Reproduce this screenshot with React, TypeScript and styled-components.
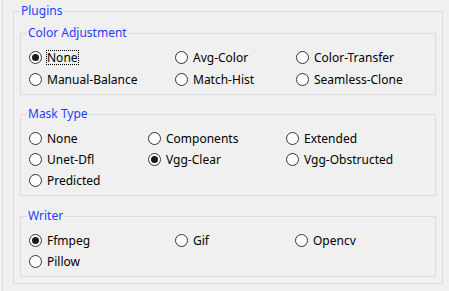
import React from 'react';
import styled, { createGlobalStyle } from 'styled-components';

const Global = createGlobalStyle`
  html, body { margin: 0; padding: 0; background: #f0f0f0; }
  body {
    font-family: "Segoe UI", "Noto Sans", sans-serif;
    font-size: 12px;
    color: #000;
  }
`;

const Window = styled.div`
  width: 447px;
  height: 291px;
  box-sizing: border-box;
  margin-left: 2px;
  border-left: 1px solid #dcdcdc;
  padding: 3px 0 0 10px;
`;

const Group = styled.fieldset<{ $mt?: number }>`
  margin: ${p => p.$mt ?? 0}px 0 0 0;
  padding: 0;
  min-width: 0;
  border: 1px solid #dcdcdc;
`;

const Outer = styled(Group)`
  width: 430px;
  box-sizing: border-box;
`;

const Legend = styled.legend`
  margin-left: 6px;
  padding: 0 1px;
  line-height: 16px;
  color: #2040ff;
`;

const Stack = styled.div`
  display: flex;
  flex-direction: column;
  padding: 6px 6px 6px 6px;
`;

const Options = styled.div<{ $cols: string; $row: number; $pt: number }>`
  display: grid;
  grid-template-columns: ${p => p.$cols};
  grid-auto-rows: ${p => p.$row}px;
  padding: ${p => p.$pt}px 8px 4px 8px;
`;

const Option = styled.label`
  display: flex;
  align-items: center;
  gap: 4px;
  white-space: nowrap;
`;

const Circle = styled.span<{ $on: boolean }>`
  flex: none;
  width: 13px;
  height: 13px;
  box-sizing: border-box;
  border: 1px solid #333;
  border-radius: 50%;
  background: #fff;
  display: grid;
  place-items: center;
  &::after {
    content: '';
    width: 7px;
    height: 7px;
    border-radius: 50%;
    background: #1a1a1a;
    display: ${p => (p.$on ? 'block' : 'none')};
  }
`;

const Caption = styled.span<{ $focus: boolean }>`
  border: 1px dotted ${p => (p.$focus ? '#000' : 'transparent')};
  line-height: 13px;
  padding: 0;
`;

type Section = {
  title: string;
  cols: string;
  options: string[];
  selected: string;
  focus?: boolean;
  row: number;
  pt: number;
  mt: number;
};

const sections: Section[] = [
  {
    title: 'Color Adjustment',
    cols: '146px 121px 1fr',
    options: ['None', 'Avg-Color', 'Color-Transfer', 'Manual-Balance', 'Match-Hist', 'Seamless-Clone'],
    selected: 'None',
    focus: true,
    row: 22,
    pt: 5,
    mt: 0,
  },
  {
    title: 'Mask Type',
    cols: '119px 138px 1fr',
    options: ['None', 'Components', 'Extended', 'Unet-Dfl', 'Vgg-Clear', 'Vgg-Obstructed', 'Predicted'],
    selected: 'Vgg-Clear',
    row: 21,
    pt: 6,
    mt: 11,
  },
  {
    title: 'Writer',
    cols: '146px 120px 1fr',
    options: ['Ffmpeg', 'Gif', 'Opencv', 'Pillow'],
    selected: 'Ffmpeg',
    row: 21,
    pt: 6,
    mt: 12,
  },
];

export default function App() {
  return (
    <>
      <Global />
      <Window>
        <Outer>
          <Legend>Plugins</Legend>
          <Stack>
            {sections.map(s => (
              <Group key={s.title} $mt={s.mt}>
                <Legend>{s.title}</Legend>
                <Options $cols={s.cols} $row={s.row} $pt={s.pt}>
                  {s.options.map(o => (
                    <Option key={o}>
                      <Circle $on={o === s.selected} />
                      <Caption $focus={!!s.focus && o === s.selected}>{o}</Caption>
                    </Option>
                  ))}
                </Options>
              </Group>
            ))}
          </Stack>
        </Outer>
      </Window>
    </>
  );
}
